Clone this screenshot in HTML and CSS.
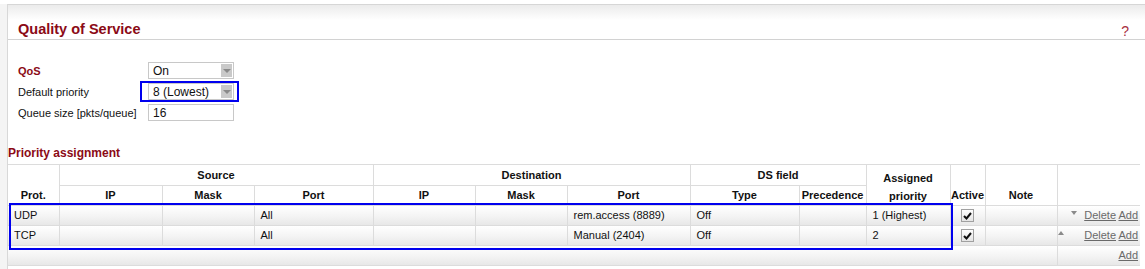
FILE: index.html
```html
<!DOCTYPE html>
<html lang="en">
<head>
    <meta charset="UTF-8">
    <title>Quality of Service</title>
    <link rel="stylesheet" href="styles.css">
</head>
<body>
    <div class="wrap">
        <div class="page">
            <div class="title-bar">
                <h1>Quality of Service</h1>
                <a class="help" href="#">?</a>
            </div>

            <div class="settings">
                <label class="lbl red">QoS</label>
                <div class="select"><span>On</span><i class="arrow"></i></div>
                <label class="lbl">Default priority</label>
                <div class="select marked"><span>8 (Lowest)</span><i class="arrow"></i></div>
                <label class="lbl">Queue size [pkts/queue]</label>
                <div class="input">16</div>
            </div>

            <h2>Priority assignment</h2>

            <div class="table-wrap">
                <table class="rules">
                    <colgroup>
                        <col style="width:51px">
                        <col style="width:103px">
                        <col style="width:92px">
                        <col style="width:119px">
                        <col style="width:102px">
                        <col style="width:92px">
                        <col style="width:123px">
                        <col style="width:109px">
                        <col style="width:67px">
                        <col style="width:84px">
                        <col style="width:35px">
                        <col style="width:72px">
                        <col style="width:83px">
                    </colgroup>
                    <thead>
                        <tr class="top">
                            <th rowspan="2" class="low">Prot.</th>
                            <th colspan="3">Source</th>
                            <th colspan="3">Destination</th>
                            <th colspan="2">DS field</th>
                            <th rowspan="2" class="low two">Assigned<br>priority</th>
                            <th rowspan="2" class="low tight">Active</th>
                            <th rowspan="2" class="low">Note</th>
                            <th rowspan="2" class="low"></th>
                        </tr>
                        <tr>
                            <th>IP</th>
                            <th>Mask</th>
                            <th>Port</th>
                            <th>IP</th>
                            <th>Mask</th>
                            <th>Port</th>
                            <th>Type</th>
                            <th class="tight">Precedence</th>
                        </tr>
                    </thead>
                    <tbody>
                        <tr>
                            <td>UDP</td>
                            <td></td>
                            <td></td>
                            <td>All</td>
                            <td></td>
                            <td></td>
                            <td>rem.access (8889)</td>
                            <td>Off</td>
                            <td></td>
                            <td>1 (Highest)</td>
                            <td class="chk"><span class="box"><svg width="9" height="8" viewBox="0 0 9 8"><path d="M1 4 L3.5 6.5 L8 1" fill="none" stroke="#111" stroke-width="2"/></svg></span></td>
                            <td></td>
                            <td class="acts"><span class="mv"></span><span class="mv"><i class="down"></i></span><a href="#">Delete</a> <a href="#">Add</a></td>
                        </tr>
                        <tr>
                            <td>TCP</td>
                            <td></td>
                            <td></td>
                            <td>All</td>
                            <td></td>
                            <td></td>
                            <td>Manual (2404)</td>
                            <td>Off</td>
                            <td></td>
                            <td>2</td>
                            <td class="chk"><span class="box"><svg width="9" height="8" viewBox="0 0 9 8"><path d="M1 4 L3.5 6.5 L8 1" fill="none" stroke="#111" stroke-width="2"/></svg></span></td>
                            <td></td>
                            <td class="acts"><span class="mv"><i class="up"></i></span><span class="mv"></span><a href="#">Delete</a> <a href="#">Add</a></td>
                        </tr>
                        <tr>
                            <td colspan="12"></td>
                            <td class="acts"><a href="#">Add</a></td>
                        </tr>
                    </tbody>
                </table>
                <div class="mark-rows"></div>
            </div>
        </div>
    </div>
</body>
</html>
```

FILE: styles.css
```css
html {
    background: #ffffff;
}
body {
    margin: 0;
    padding-top: 4px;
    font-family: "Liberation Sans", Arial, sans-serif;
    font-size: 11px;
    color: #111;
}
.wrap {
    background: #f4f4f4;
    padding-left: 7px;
    min-height: 265px;
}
.page {
    background: #ffffff;
    border-left: 1px solid #d8d8d8;
    border-top: 1px solid #d6d6d6;
    min-height: 264px;
}
.title-bar {
    display: flex;
    justify-content: space-between;
    align-items: flex-start;
    height: 35px;
    box-sizing: border-box;
    padding: 16px 16px 0 10px;
    background: linear-gradient(to bottom, #ebebeb, #ffffff 45%);
    border-bottom: 1px solid #d2d2d2;
}
.title-bar h1 {
    margin: 0;
    font-size: 14.5px;
    line-height: 17px;
    font-weight: bold;
    color: #8b0a16;
}
.help {
    color: #a8303f;
    font-size: 14px;
    line-height: 17px;
    padding-top: 2px;
    text-decoration: none;
}
.settings {
    display: grid;
    grid-template-columns: 130px 86px;
    grid-auto-rows: 17px;
    row-gap: 4px;
    align-items: center;
    padding: 22px 0 0 10px;
}
.lbl {
    font-size: 11px;
    line-height: 13px;
    padding-top: 1px;
    color: #111;
}
.lbl.red {
    color: #8b0a16;
    font-weight: bold;
}
.select, .input {
    position: relative;
    display: flex;
    align-items: center;
    height: 17px;
    box-sizing: border-box;
    border: 1px solid #c8c8c8;
    background: #fff;
    font-size: 12px;
    padding-left: 4px;
}
.select span {
    flex: 1;
}
.select .arrow {
    width: 11px;
    height: 13px;
    margin-right: 1px;
    background: #c9c9c9;
    display: flex;
    align-items: center;
    justify-content: center;
}
.select .arrow::before {
    content: "";
    border-left: 4px solid transparent;
    border-right: 4px solid transparent;
    border-top: 4px solid #8a8a8a;
}
.select.marked::after {
    content: "";
    position: absolute;
    top: -3px;
    bottom: -3px;
    left: -9px;
    right: -6px;
    border: 2px solid #0000ee;
}
h2 {
    margin: 25px 0 3px 0;
    font-size: 12px;
    line-height: 15px;
    font-weight: bold;
    color: #8b0a16;
}
.table-wrap {
    position: relative;
}
.rules {
    border-collapse: collapse;
    table-layout: fixed;
    width: 1132px;
    font-size: 11px;
}
.rules th, .rules td {
    border: 1px solid #dcdcdc;
    padding: 0 6px;
    line-height: 13px;
    white-space: nowrap;
    overflow: hidden;
}
.rules tr > :first-child {
    border-left: none;
}
.rules tr > :last-child {
    border-right: none;
}
.rules th {
    font-weight: bold;
    text-align: center;
    height: 19px;
}
.rules tr.top th {
    height: 20px;
}
.rules th.low {
    vertical-align: bottom;
    padding-bottom: 3px;
}
.rules th.two {
    line-height: 18px;
    padding-bottom: 0;
}
.rules th.tight {
    padding-left: 0;
    padding-right: 0;
    overflow: visible;
}
.rules tbody tr {
    background: linear-gradient(to bottom, #ffffff, #f3f3f3 55%, #e6e6e6);
}
.rules td {
    height: 19px;
}
.rules td.chk {
    text-align: center;
    padding: 0;
}
.box {
    display: inline-flex;
    align-items: center;
    justify-content: center;
    width: 13px;
    height: 13px;
    box-sizing: border-box;
    border: 1px solid #a0a0a0;
    background: linear-gradient(to bottom, #ffffff, #e4e4e4);
    vertical-align: middle;
}
.rules td.acts {
    text-align: right;
    padding: 0 2px 0 0;
}
.mv {
    display: inline-block;
    width: 13px;
    height: 13px;
    vertical-align: top;
}
.mv i {
    display: block;
    width: 0;
    height: 0;
    margin-top: 2px;
    border-left: 3.5px solid transparent;
    border-right: 3.5px solid transparent;
}
.mv .down {
    border-top: 4px solid #8a8a8a;
}
.mv .up {
    border-bottom: 4px solid #8a8a8a;
}
.acts a {
    color: #6a6a6a;
    text-decoration: underline;
}
.mark-rows {
    position: absolute;
    left: 1px;
    top: 39px;
    width: 944px;
    height: 47px;
    box-sizing: border-box;
    border: 2px solid #0000ee;
}
```
